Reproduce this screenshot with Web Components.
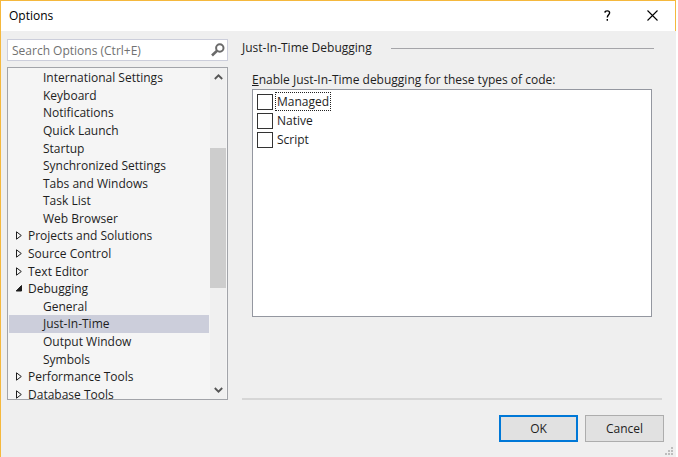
<!DOCTYPE html>
<html lang="en">
<head>
<meta charset="utf-8">
<title>Options</title>
<style>
  html, body { height: 100%; }
  body {
    margin: 0; padding-right: 2px; box-sizing: border-box; background: #fff;
    font: 12px/18px "Open Sans", "Noto Sans", sans-serif; color: #1e1e1e;
  }
</style>
</head>
<body>
<options-dialog>
  <title-bar slot="title">Options</title-bar>
  <search-box slot="side" label="Search Options (Ctrl+E)"></search-box>
  <tree-view slot="side">
    <tree-row level="2">International Settings</tree-row>
    <tree-row level="2">Keyboard</tree-row>
    <tree-row level="2">Notifications</tree-row>
    <tree-row level="2">Quick Launch</tree-row>
    <tree-row level="2">Startup</tree-row>
    <tree-row level="2">Synchronized Settings</tree-row>
    <tree-row level="2">Tabs and Windows</tree-row>
    <tree-row level="2">Task List</tree-row>
    <tree-row level="2">Web Browser</tree-row>
    <tree-row level="1" state="closed">Projects and Solutions</tree-row>
    <tree-row level="1" state="closed">Source Control</tree-row>
    <tree-row level="1" state="closed">Text Editor</tree-row>
    <tree-row level="1" state="open">Debugging</tree-row>
    <tree-row level="2">General</tree-row>
    <tree-row level="2" selected>Just-In-Time</tree-row>
    <tree-row level="2">Output Window</tree-row>
    <tree-row level="2">Symbols</tree-row>
    <tree-row level="1" state="closed">Performance Tools</tree-row>
    <tree-row level="1" state="closed">Database Tools</tree-row>
  </tree-view>
  <option-page slot="page">
    <span slot="heading">Just-In-Time Debugging</span>
    <span slot="caption"><u>E</u>nable Just-In-Time debugging for these types of code:</span>
    <check-item current>Managed</check-item>
    <check-item>Native</check-item>
    <check-item>Script</check-item>
  </option-page>
  <push-button slot="actions" primary>OK</push-button>
  <push-button slot="actions">Cancel</push-button>
</options-dialog>

<script>
function define(name, markup, setup) {
  const template = document.createElement('template');
  template.innerHTML = markup;
  customElements.define(name, class extends HTMLElement {
    constructor() {
      super();
      this.attachShadow({ mode: 'open' }).append(template.content.cloneNode(true));
    }
    connectedCallback() { if (setup) setup(this, this.shadowRoot); }
  });
}

define('options-dialog', `
  <style>
    :host { display: flex; flex-direction: column; min-height: 100%; box-sizing: border-box;
      background: #efefef; border-left: 1px solid #f5b83d; position: relative; }
    main { flex: 1; display: flex; gap: 14px; padding: 8px 14px 0 6px; }
    .side { flex: 0 0 221px; display: flex; flex-direction: column; gap: 6px; }
    .content { flex: 1; min-width: 0; display: flex; flex-direction: column; }
    .page { flex: 1; }
    hr { margin: 0; border: 0; height: 2px; background: #d6d6d6; }
    footer { display: flex; justify-content: flex-end; gap: 7px; padding: 15px 12px 15px 0; }
    .grip { position: absolute; right: 2px; bottom: 1px; }
  </style>
  <slot name="title"></slot>
  <main>
    <div class="side"><slot name="side"></slot></div>
    <div class="content"><div class="page"><slot name="page"></slot></div><hr></div>
  </main>
  <footer><slot name="actions"></slot></footer>
  <svg class="grip" width="9" height="9" fill="#bdbdbd" aria-hidden="true">
    <path d="M6 0h2v2h-2zM3 3h2v2h-2zM6 3h2v2h-2zM0 6h2v2h-2zM3 6h2v2h-2zM6 6h2v2h-2z"/>
  </svg>`);

define('title-bar', `
  <style>
    :host { display: flex; align-items: center; height: 29px; padding: 0 11px 1px 8px; background: #fff;
      border-top: 1px solid #f5b83d; border-right: 1px solid #f5b83d; color: #000; }
    h1 { flex: 1; margin: 0; font: inherit; }
    button { border: 0; padding: 0; background: none; width: 24px; height: 24px; color: #000;
      display: grid; place-items: center; }
    button + button { margin-left: 21px; }
  </style>
  <h1><slot></slot></h1>
  <button aria-label="Help"><svg width="7" height="11" viewBox="0 0 7 11" fill="none" stroke="currentColor" stroke-width="1.400"><path d="M.9 2.600C1 .4 5.600.2 5.600 2.800c0 1.900-2.300 2-2.300 4.700M3.300 9v1.700"/></svg></button>
  <button aria-label="Close"><svg width="11" height="11" viewBox="0 0 11 11" stroke="currentColor" stroke-width="1.100"><path d="M.5.5l10 10M10.500.5l-10 10"/></svg></button>`);

define('search-box', `
  <style>
    :host { display: flex; align-items: center; height: 20px; background: #fff; border: 1px solid #cccedb; }
    input { flex: 1; min-width: 0; border: 0; outline: 0; padding: 1px 0 0 4px; background: none; font: inherit; color: #1e1e1e; }
    input::placeholder { color: #717171; opacity: 1; }
    button { border: 0; background: none; padding: 0 2px 0 0; display: flex; }
  </style>
  <input type="text"><button aria-label="Search"><svg width="14" height="14" viewBox="0 0 14 14" fill="none" stroke="#6a6a6a"><circle cx="8.800" cy="5" r="3.700" stroke-width="2"/><path d="M6 7.800L1 12.500" stroke-width="2.600"/></svg></button>`,
  (host, root) => {
    const input = root.querySelector('input');
    input.placeholder = host.getAttribute('label');
    input.setAttribute('aria-label', host.getAttribute('label'));
  });

define('tree-view', `
  <style>
    :host { flex: 1 1 0; display: flex; min-height: 0; overflow: hidden; background: #f5f5f5; border: 1px solid #a2a4a9; }
    .rows { flex: 1; display: grid; grid-auto-rows: 1fr; height: 334px; padding: 1px 0 0 1px; }
    .bar { width: 16px; margin: 0 1px; background: #f0f0f0; display: flex; flex-direction: column; }
    .bar button { flex: none; height: 18px; border: 0; padding: 0; background: none; display: grid; place-items: center; }
    .track { flex: 1; display: grid; grid-template-rows: 62fr 140fr 93fr; }
    .thumb { grid-row: 2; background: #cdcdcd; }
  </style>
  <div class="rows" role="tree"><slot></slot></div>
  <div class="bar">
    <button aria-label="Scroll up"><svg width="9" height="6" fill="none" stroke="#555" stroke-width="1.800"><path d="M.8 5l3.700-3.700L8.200 5"/></svg></button>
    <div class="track"><div class="thumb"></div></div>
    <button aria-label="Scroll down"><svg width="9" height="6" fill="none" stroke="#555" stroke-width="1.800"><path d="M.8 1l3.700 3.700L8.200 1"/></svg></button>
  </div>`);

define('tree-row', `
  <style>
    :host { display: flex; align-items: center; min-height: 0; padding: 1px 0 0 6px; white-space: nowrap; line-height: 16px; }
    :host([level="2"]) { padding-left: 21px; }
    :host([selected]) { background: #cccedb; }
    svg { flex: none; width: 13px; height: 10px; fill: none; stroke: #1e1e1e; display: none; }
    .blank { width: 13px; }
    :host([state]) .blank { display: none; }
    :host([state="closed"]) .closed, :host([state="open"]) .open { display: block; }
  </style>
  <span class="blank"></span>
  <svg class="closed"><path d="M1.500.8v7.400L6.300 4.500z"/></svg>
  <svg class="open"><path d="M6.500 1.500v5.500H1.200z" fill="#1e1e1e"/></svg>
  <slot></slot>`,
  host => {
    host.setAttribute('role', 'treeitem');
    host.setAttribute('aria-level', host.getAttribute('level'));
    if (host.hasAttribute('state')) host.setAttribute('aria-expanded', host.getAttribute('state') === 'open');
    if (host.hasAttribute('selected')) host.setAttribute('aria-selected', 'true');
  });

define('option-page', `
  <style>
    :host { display: block; }
    header { display: flex; align-items: center; gap: 19px; padding-right: 8px; }
    h2 { margin: 0; font: inherit; }
    .rule { flex: 1; height: 1px; background: #a5a5a9; }
    .group { padding: 14px 10px 0 10px; }
    .list { box-sizing: border-box; min-height: 228px; padding: 2px 4px;
      background: #fff; border: 1px solid #9497a0; }
  </style>
  <header><h2><slot name="heading"></slot></h2><div class="rule"></div></header>
  <div class="group">
    <div id="caption"><slot name="caption"></slot></div>
    <div class="list" role="group" aria-labelledby="caption"><slot></slot></div>
  </div>`);

define('check-item', `
  <style>
    :host { display: block; }
    label { display: flex; align-items: center; gap: 2px; height: 19px; }
    input { appearance: none; margin: 0; width: 16px; height: 16px; background: #fff; border: 1px solid #333; }
    span { padding: 0 1px; line-height: 17px; border: 1px solid transparent; }
    :host([current]) span { border: 1px dotted #222; }
  </style>
  <label><input type="checkbox"><span><slot></slot></span></label>`);

define('push-button', `
  <style>
    :host { display: block; }
    button { box-sizing: border-box; width: 79px; height: 27px; padding: 0; font: inherit; color: #1e1e1e;
      background: #e1e1e1; border: 1px solid #adadad; }
    :host([primary]) button { border: 2px solid #0078d7; }
  </style>
  <button type="button"><slot></slot></button>`);
</script>
</body>
</html>
